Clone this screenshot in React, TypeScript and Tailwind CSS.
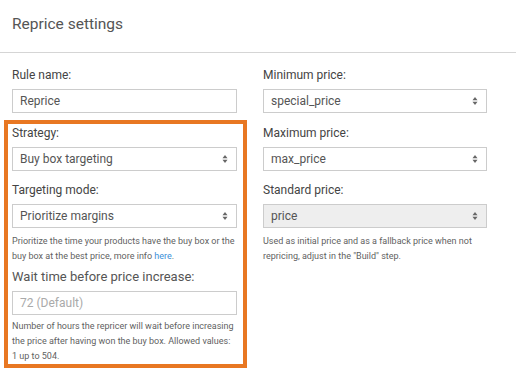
import React from 'react';

const Arrows = () => (
  <svg width="6" height="10" viewBox="0 0 6 10" className="shrink-0">
    <path d="M3 1 L5.5 4.2 L0.5 4.2 Z" fill="#666" />
    <path d="M3 9 L5.5 5.8 L0.5 5.8 Z" fill="#666" />
  </svg>
);

const Select = ({ value, disabled }: { value: string; disabled?: boolean }) => (
  <div
    className={`flex h-[24px] items-center justify-between border border-[#ccc] pl-[7px] pr-[8px] text-[12px] text-[#555] ${
      disabled ? 'bg-[#eee]' : 'bg-white'
    }`}
  >
    <span>{value}</span>
    <Arrows />
  </div>
);

const Input = ({ value, placeholder }: { value?: string; placeholder?: string }) => (
  <div className="flex h-[24px] items-center border border-[#ccc] bg-white pl-[7px] text-[12px]">
    {value ? <span className="text-[#555]">{value}</span> : <span className="text-[#aaa]">{placeholder}</span>}
  </div>
);

const Label = ({ children }: { children: React.ReactNode }) => (
  <div className="mb-[5px] h-[18px] text-[12px] leading-[18px] text-[#444]">{children}</div>
);

const Help = ({ children }: { children: React.ReactNode }) => (
  <p className="text-[9px] leading-[15px] text-[#5f5f5f]">{children}</p>
);

export default function App() {
  return (
    <div className="h-[374px] w-[516px] overflow-hidden bg-white" style={{ fontFamily: 'Roboto, "Liberation Sans", sans-serif' }}>
      <div className="h-[53px] border-b border-[#d5d5d5] px-3 pt-[13px]">
        <h1 className="text-[15.5px] leading-[22px] text-[#555]">Reprice settings</h1>
      </div>

      <div className="flex gap-[26px] px-3 pt-[13px]">
        {/* left column */}
        <div className="w-[225px]">
          <Label>Rule name:</Label>
          <Input value="Reprice" />

          <div className="mt-[7px] -ml-[8px] w-[243px] border-4 border-[#e87722] pl-[4px] pr-[6px]">
            <Label>Strategy:</Label>
            <Select value="Buy box targeting" />

            <div className="mt-[10px]">
              <Label>Targeting mode:</Label>
              <Select value="Prioritize margins" />
            </div>

            <div className="mt-[6px]">
              <Help>
                Prioritize the time your products have the buy box or the buy box at the best price, more info{' '}
                <a className="text-[#3b8fd9]">here</a>.
              </Help>
            </div>

            <div className="mt-[4px]">
              <div className="mb-[5px] h-[18px] text-[13px] leading-[18px] text-[#555]">Wait time before price increase:</div>
              <Input placeholder="72 (Default)" />
            </div>

            <div className="mt-[4px]">
              <Help>
                Number of hours the repricer will wait before increasing the price after having won the buy box. Allowed
                values: 1 up to 504.
              </Help>
            </div>
          </div>
        </div>

        {/* right column */}
        <div className="w-[224px]">
          <Label>Minimum price:</Label>
          <Select value="special_price" />

          <div className="mt-[11px]">
            <Label>Maximum price:</Label>
            <Select value="max_price" />
          </div>

          <div className="mt-[10px]">
            <Label>Standard price:</Label>
            <Select value="price" disabled />
          </div>

          <div className="mt-[6px]">
            <Help>Used as initial price and as a fallback price when not repricing, adjust in the "Build" step.</Help>
          </div>
        </div>
      </div>
    </div>
  );
}
